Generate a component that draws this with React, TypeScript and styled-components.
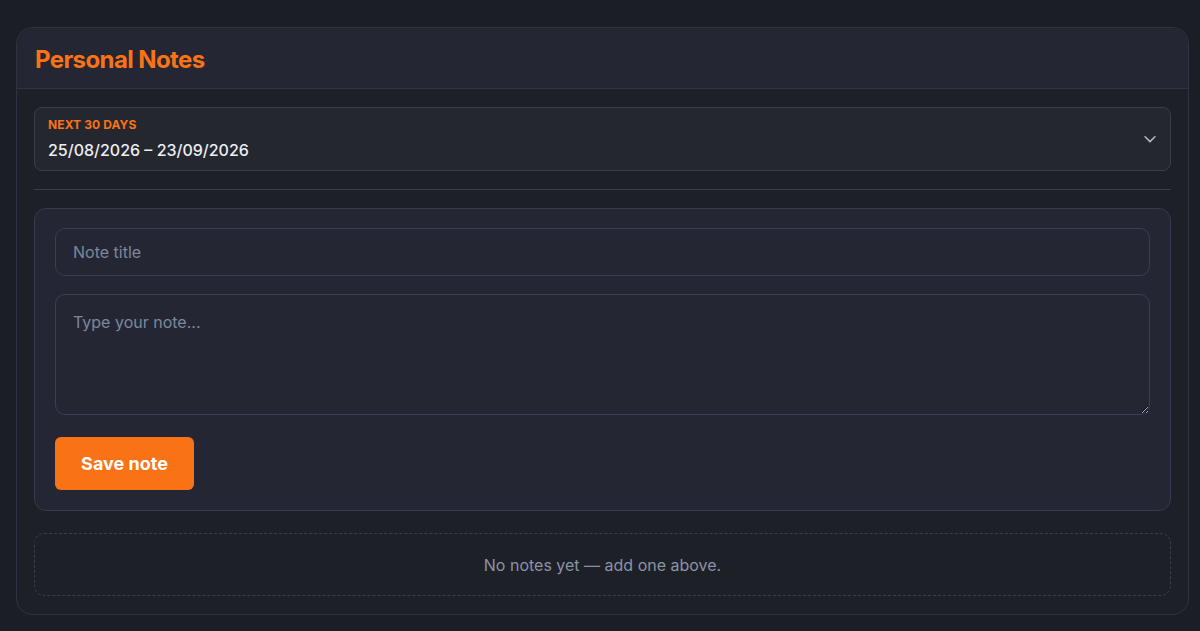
import React from "react";
import styled, { createGlobalStyle } from "styled-components";

const GlobalStyle = createGlobalStyle`
  * { box-sizing: border-box; }
  html, body { margin: 0; padding: 0; background: #1c1e25; }
  body {
    font-family: Inter, "Noto Sans", sans-serif;
    color: #e5e7eb;
  }
`;

const Page = styled.div`
  padding: 27px 11px 16px 16px;
  min-height: 631px;
`;

const Card = styled.section`
  border: 1px solid #2f3242;
  border-radius: 16px;
  background: #1e2028;
  overflow: hidden;
`;

const Header = styled.header`
  height: 61px;
  display: flex;
  align-items: center;
  padding: 2px 18px 0;
  background: #242733;
  border-bottom: 1px solid #313446;
`;

const Title = styled.h1`
  margin: 0;
  font-size: 24px;
  font-weight: 700;
  letter-spacing: -0.6px;
  color: #f97316;
`;

const Body = styled.div`
  padding: 18px 17px 18px 17px;
  display: flex;
  flex-direction: column;
`;

const RangeSelect = styled.button`
  all: unset;
  box-sizing: border-box;
  height: 64px;
  border: 1px solid #3b3e48;
  border-radius: 8px;
  background: #25272f;
  display: flex;
  align-items: center;
  justify-content: space-between;
  padding: 0 11px 0 13px;
  cursor: pointer;
`;

const RangeText = styled.div`
  display: flex;
  flex-direction: column;
  gap: 8px;
  padding-bottom: 2px;
`;

const RangeLabel = styled.span`
  font-size: 12px;
  font-weight: 700;
  color: #f97316;
  letter-spacing: 0.1px;
`;

const RangeValue = styled.span`
  font-size: 16px;
  font-weight: 500;
  color: #eceef3;
  letter-spacing: 0;
`;

const Divider = styled.hr`
  margin: 18px 0 18px;
  border: 0;
  border-top: 1px solid #3a3d4a;
`;

const Composer = styled.form`
  border: 1px solid #363a52;
  border-radius: 12px;
  background: #242733;
  padding: 19px 20px 20px 20px;
  display: flex;
  flex-direction: column;
  align-items: flex-start;
`;

const fieldBase = `
  width: 100%;
  border: 1px solid #393d5a;
  border-radius: 10px;
  background: #242733;
  color: #e5e7eb;
  font-family: Inter, "Noto Sans", sans-serif;
  font-size: 16px;
  letter-spacing: 0;
  padding: 0 17px;
  outline: none;
  &::placeholder { color: #7d879b; }
`;

const TitleInput = styled.input`
  ${fieldBase}
  height: 48px;
`;

const NoteArea = styled.textarea`
  ${fieldBase}
  height: 121px;
  margin-top: 18px;
  padding-top: 17px;
  resize: vertical;
  display: block;
`;

const SaveButton = styled.button`
  margin-top: 22px;
  height: 53px;
  width: 139px;
  border: 0;
  border-radius: 6px;
  background: #f97316;
  color: #ffffff;
  font-family: Inter, "Noto Sans", sans-serif;
  font-size: 18px;
  font-weight: 700;
  letter-spacing: 0;
  cursor: pointer;
`;

const Empty = styled.div`
  margin-top: 22px;
  height: 63px;
  border: 1px dashed #3a3d4c;
  border-radius: 10px;
  display: flex;
  align-items: center;
  justify-content: center;
  font-size: 16px;
  color: #8a93a6;
  letter-spacing: 0;
`;

const Chevron = () => (
  <svg width="18" height="18" viewBox="0 0 24 24" fill="none" stroke="#aab1c2" strokeWidth="2.2" strokeLinecap="round" strokeLinejoin="round">
    <path d="M5.5 9l6.5 6.5 6.5-6.5" />
  </svg>
);

export default function App() {
  return (
    <>
      <GlobalStyle />
      <Page>
        <Card>
          <Header>
            <Title>Personal Notes</Title>
          </Header>
          <Body>
            <RangeSelect type="button">
              <RangeText>
                <RangeLabel>NEXT 30 DAYS</RangeLabel>
                <RangeValue>25/08/2026 – 23/09/2026</RangeValue>
              </RangeText>
              <Chevron />
            </RangeSelect>
            <Divider />
            <Composer onSubmit={(e) => e.preventDefault()}>
              <TitleInput placeholder="Note title" />
              <NoteArea placeholder="Type your note..." />
              <SaveButton type="submit">Save note</SaveButton>
            </Composer>
            <Empty>No notes yet — add one above.</Empty>
          </Body>
        </Card>
      </Page>
    </>
  );
}
